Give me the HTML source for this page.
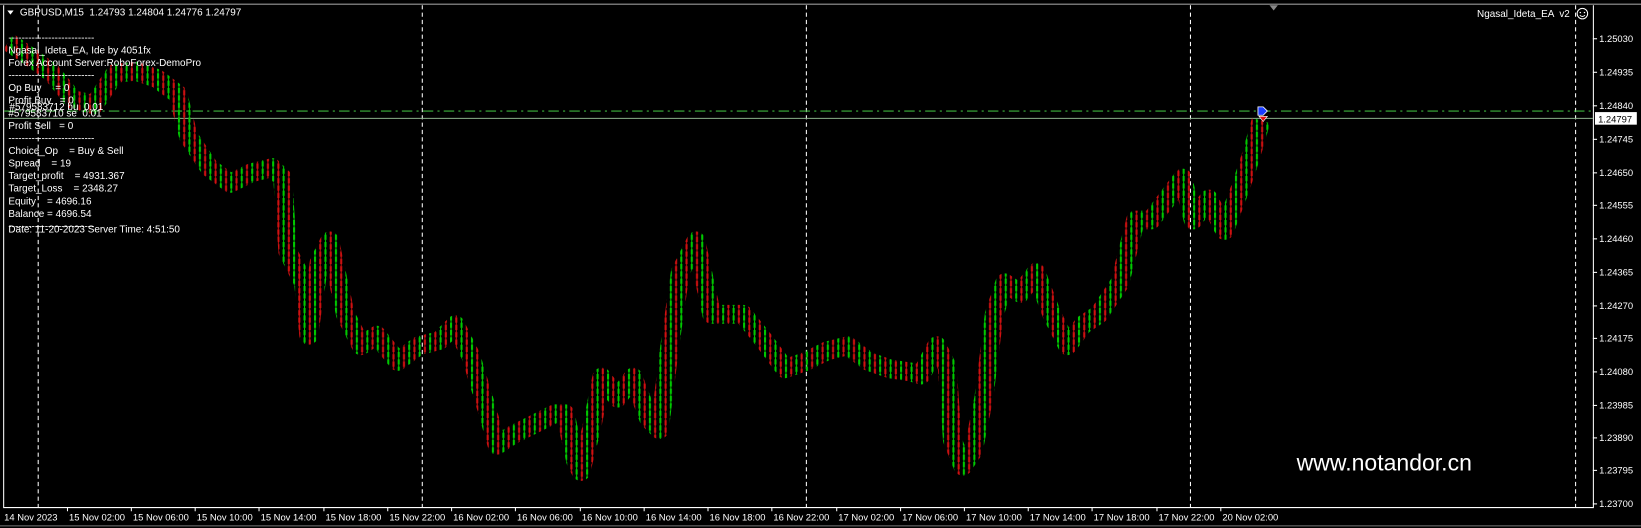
<!DOCTYPE html>
<html><head><meta charset="utf-8"><style>
html,body{margin:0;padding:0;background:#000;width:1641px;height:528px;overflow:hidden}
svg{display:block}
text{font-family:"Liberation Sans",sans-serif;fill:#fff;white-space:pre}
</style></head><body>
<svg width="1641" height="528" viewBox="0 0 1568 504" preserveAspectRatio="none" xml:space="preserve">
<defs>
<pattern id="cd" patternUnits="userSpaceOnUse" width="10" height="7">
<rect x="0" y="0" width="2" height="5" fill="#00c800"/>
<rect x="0.5" y="5" width="1" height="2" fill="#00c800"/>
<rect x="5" y="2" width="2" height="5" fill="#d01010"/>
<rect x="5.5" y="0" width="1" height="2" fill="#d01010"/>
</pattern>
</defs>
<rect width="1568" height="504" fill="#000"/>
<line x1="0" y1="4" x2="1568" y2="4" stroke="#999" stroke-width="1"/>
<line x1="3.5" y1="5" x2="3.5" y2="484" stroke="#fff"/>
<line x1="1522.5" y1="5" x2="1522.5" y2="484" stroke="#fff"/>
<line x1="3" y1="484.5" x2="1523" y2="484.5" stroke="#fff"/>
<polygon points="1213,5 1221,5 1217,10" fill="#888"/>
<g stroke="#fff" stroke-dasharray="4 3">
<line x1="36.5" y1="5" x2="36.5" y2="484"/>
<line x1="403.5" y1="5" x2="403.5" y2="484"/>
<line x1="770.5" y1="5" x2="770.5" y2="484"/>
<line x1="1137.5" y1="5" x2="1137.5" y2="484"/>
<line x1="1505.5" y1="5" x2="1505.5" y2="484"/>
</g>
<line x1="4" y1="106" x2="1522" y2="106" stroke="#3cb43c" stroke-dasharray="10 4 2 4"/>
<line x1="4" y1="113" x2="1522" y2="113" stroke="#8ab08a"/>
<polyline fill="none" stroke="url(#cd)" stroke-width="18" stroke-linejoin="round" points="8,40 30,55 50,70 70,95 90,100 110,70 130,68 150,75 170,90 180,130 200,160 220,175 240,165 260,160 270,170 275,240 290,270 295,320 305,250 315,230 330,300 345,330 360,320 380,345 400,330 420,325 435,310 450,340 465,390 475,425 490,415 510,405 530,395 540,395 550,440 555,450 565,410 575,360 590,380 605,360 620,400 630,410 640,330 650,260 665,230 680,300 695,300 710,300 730,325 750,352 770,345 790,335 810,330 830,345 850,352 870,355 880,358 895,330 905,350 910,420 920,445 930,430 940,380 950,300 960,270 975,280 990,260 1005,300 1020,330 1035,310 1050,300 1070,270 1085,210 1100,210 1115,190 1130,170 1140,210 1155,190 1170,220 1185,180 1195,150 1205,115"/>
<polygon points="1202,102 1207,102 1211,106 1207,110 1202,110" fill="#1a3cff" stroke="#fff" stroke-width="0.8"/>
<polygon points="1203,111 1211,111 1207,116" fill="#e01010" stroke="#fff" stroke-width="0.6"/>
<polygon points="7,10 13,10 10,14" fill="#fff"/>
<text x="19" y="15" font-size="9.5">GBPUSD,M15  1.24793 1.24804 1.24776 1.24797</text>
<text x="1500" y="16" font-size="9.5" text-anchor="end">Ngasal_Ideta_EA  v2</text>
<circle cx="1512" cy="13" r="5" fill="none" stroke="#fff"/>
<circle cx="1510" cy="12" r="0.7" fill="#fff"/><circle cx="1514" cy="12" r="0.7" fill="#fff"/>
<path d="M1509.5,14.5 Q1512,17 1514.5,14.5" stroke="#fff" fill="none" stroke-width="0.8"/>
<g font-size="9.5">
<text x="8" y="39">--------------------------</text>
<text x="8" y="51">Ngasal_Ideta_EA, Ide by 4051fx</text>
<text x="8" y="63">Forex Account Server:RoboForex-DemoPro</text>
<text x="8" y="75">--------------------------</text>
<text x="8" y="87">Op Buy     = 0</text>
<text x="8" y="99">Profit Buy   = 0</text>
<text x="9" y="105">#579583712 bu  0.01</text>
<text x="8" y="111">#579583710 se  0.01</text>
<text x="8" y="123">Profit Sell   = 0</text>
<text x="8" y="135">--------------------------</text>
<text x="8" y="147">Choice_Op    = Buy &amp; Sell</text>
<text x="8" y="159">Spread    = 19</text>
<text x="8" y="171">Target_profit    = 4931.367</text>
<text x="8" y="183">Target_Loss    = 2348.27</text>
<text x="8" y="195">Equity    = 4696.16</text>
<text x="8" y="207">Balance = 4696.54</text>
<text x="8" y="219">--------------------------</text>
<text x="8" y="222">Date: 11-20-2023 Server Time: 4:51:50</text>
</g>
<text x="1239" y="449" font-size="22">www.notandor.cn</text>
<g font-size="9">
<text x="1528" y="40">1.25030</text>
<text x="1528" y="72">1.24935</text>
<text x="1528" y="104">1.24840</text>
<text x="1528" y="136">1.24745</text>
<text x="1528" y="168">1.24650</text>
<text x="1528" y="199">1.24555</text>
<text x="1528" y="231">1.24460</text>
<text x="1528" y="263">1.24365</text>
<text x="1528" y="295">1.24270</text>
<text x="1528" y="326">1.24175</text>
<text x="1528" y="358">1.24080</text>
<text x="1528" y="390">1.23985</text>
<text x="1528" y="421">1.23890</text>
<text x="1528" y="452">1.23795</text>
<text x="1528" y="484">1.23700</text>
</g>
<g stroke="#fff">
<line x1="1522" y1="37" x2="1526" y2="37"/><line x1="1522" y1="69" x2="1526" y2="69"/><line x1="1522" y1="101" x2="1526" y2="101"/><line x1="1522" y1="133" x2="1526" y2="133"/><line x1="1522" y1="165" x2="1526" y2="165"/><line x1="1522" y1="196" x2="1526" y2="196"/><line x1="1522" y1="228" x2="1526" y2="228"/><line x1="1522" y1="260" x2="1526" y2="260"/><line x1="1522" y1="292" x2="1526" y2="292"/><line x1="1522" y1="323" x2="1526" y2="323"/><line x1="1522" y1="355" x2="1526" y2="355"/><line x1="1522" y1="387" x2="1526" y2="387"/><line x1="1522" y1="418" x2="1526" y2="418"/><line x1="1522" y1="449" x2="1526" y2="449"/><line x1="1522" y1="481" x2="1526" y2="481"/>
</g>
<rect x="1524" y="107" width="40" height="12" fill="#fff"/>
<text x="1527" y="117" font-size="9" style="fill:#000">1.24797</text>
<g font-size="9">
<text x="4" y="497">14 Nov 2023</text>
<text x="66" y="497">15 Nov 02:00</text>
<text x="127" y="497">15 Nov 06:00</text>
<text x="188" y="497">15 Nov 10:00</text>
<text x="249" y="497">15 Nov 14:00</text>
<text x="311" y="497">15 Nov 18:00</text>
<text x="372" y="497">15 Nov 22:00</text>
<text x="433" y="497">16 Nov 02:00</text>
<text x="494" y="497">16 Nov 06:00</text>
<text x="556" y="497">16 Nov 10:00</text>
<text x="617" y="497">16 Nov 14:00</text>
<text x="678" y="497">16 Nov 18:00</text>
<text x="739" y="497">16 Nov 22:00</text>
<text x="801" y="497">17 Nov 02:00</text>
<text x="862" y="497">17 Nov 06:00</text>
<text x="923" y="497">17 Nov 10:00</text>
<text x="984" y="497">17 Nov 14:00</text>
<text x="1045" y="497">17 Nov 18:00</text>
<text x="1107" y="497">17 Nov 22:00</text>
<text x="1168" y="497">20 Nov 02:00</text>
</g>
<g stroke="#fff">
<line x1="64.5" y1="484" x2="64.5" y2="488"/><line x1="125.5" y1="484" x2="125.5" y2="488"/><line x1="186.5" y1="484" x2="186.5" y2="488"/><line x1="247.5" y1="484" x2="247.5" y2="488"/><line x1="309.5" y1="484" x2="309.5" y2="488"/><line x1="370.5" y1="484" x2="370.5" y2="488"/><line x1="431.5" y1="484" x2="431.5" y2="488"/><line x1="492.5" y1="484" x2="492.5" y2="488"/><line x1="554.5" y1="484" x2="554.5" y2="488"/><line x1="615.5" y1="484" x2="615.5" y2="488"/><line x1="676.5" y1="484" x2="676.5" y2="488"/><line x1="737.5" y1="484" x2="737.5" y2="488"/><line x1="799.5" y1="484" x2="799.5" y2="488"/><line x1="860.5" y1="484" x2="860.5" y2="488"/><line x1="921.5" y1="484" x2="921.5" y2="488"/><line x1="982.5" y1="484" x2="982.5" y2="488"/><line x1="1043.5" y1="484" x2="1043.5" y2="488"/><line x1="1105.5" y1="484" x2="1105.5" y2="488"/><line x1="1166.5" y1="484" x2="1166.5" y2="488"/>
</g>
<line x1="0" y1="502" x2="1568" y2="502" stroke="#777"/>
</svg>
</body></html>
